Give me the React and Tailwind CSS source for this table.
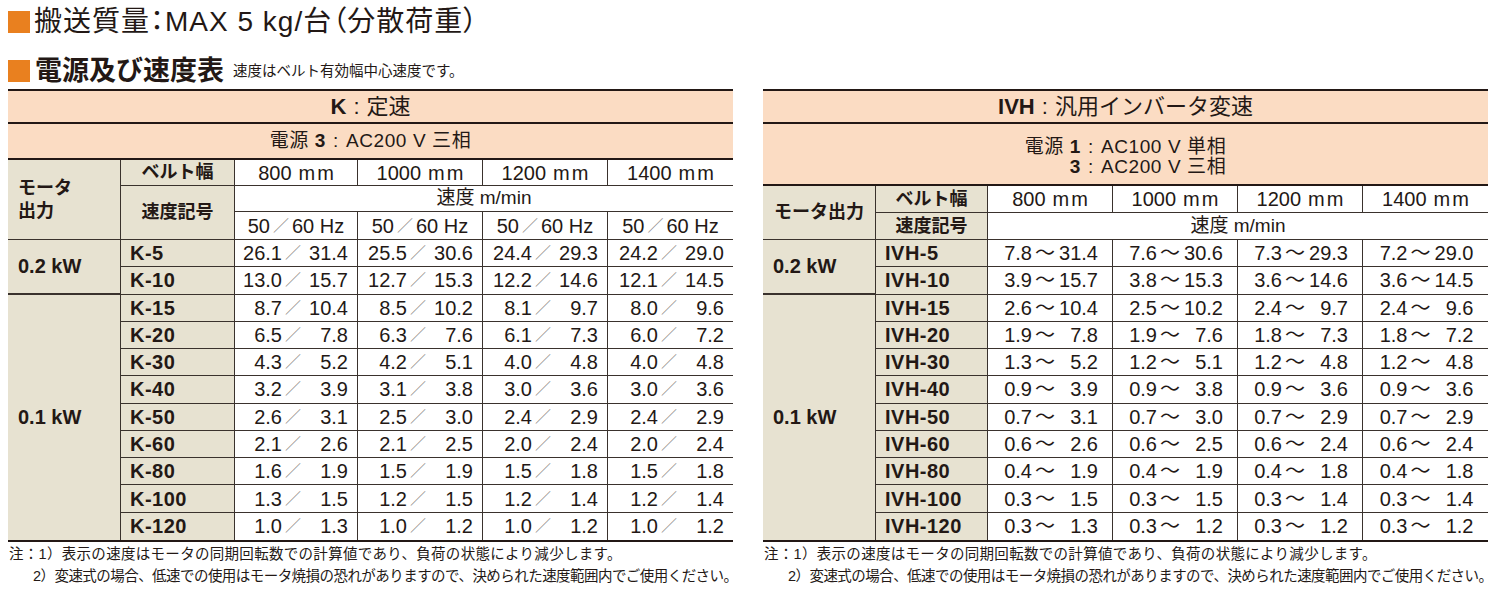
import React from "react";

const K_ROWS = [
  ["K-5", [["26.1", "31.4"], ["25.5", "30.6"], ["24.4", "29.3"], ["24.2", "29.0"]]],
  ["K-10", [["13.0", "15.7"], ["12.7", "15.3"], ["12.2", "14.6"], ["12.1", "14.5"]]],
  ["K-15", [["8.7", "10.4"], ["8.5", "10.2"], ["8.1", "9.7"], ["8.0", "9.6"]]],
  ["K-20", [["6.5", "7.8"], ["6.3", "7.6"], ["6.1", "7.3"], ["6.0", "7.2"]]],
  ["K-30", [["4.3", "5.2"], ["4.2", "5.1"], ["4.0", "4.8"], ["4.0", "4.8"]]],
  ["K-40", [["3.2", "3.9"], ["3.1", "3.8"], ["3.0", "3.6"], ["3.0", "3.6"]]],
  ["K-50", [["2.6", "3.1"], ["2.5", "3.0"], ["2.4", "2.9"], ["2.4", "2.9"]]],
  ["K-60", [["2.1", "2.6"], ["2.1", "2.5"], ["2.0", "2.4"], ["2.0", "2.4"]]],
  ["K-80", [["1.6", "1.9"], ["1.5", "1.9"], ["1.5", "1.8"], ["1.5", "1.8"]]],
  ["K-100", [["1.3", "1.5"], ["1.2", "1.5"], ["1.2", "1.4"], ["1.2", "1.4"]]],
  ["K-120", [["1.0", "1.3"], ["1.0", "1.2"], ["1.0", "1.2"], ["1.0", "1.2"]]],
];

const IVH_ROWS = [
  ["IVH-5", [["7.8", "31.4"], ["7.6", "30.6"], ["7.3", "29.3"], ["7.2", "29.0"]]],
  ["IVH-10", [["3.9", "15.7"], ["3.8", "15.3"], ["3.6", "14.6"], ["3.6", "14.5"]]],
  ["IVH-15", [["2.6", "10.4"], ["2.5", "10.2"], ["2.4", "9.7"], ["2.4", "9.6"]]],
  ["IVH-20", [["1.9", "7.8"], ["1.9", "7.6"], ["1.8", "7.3"], ["1.8", "7.2"]]],
  ["IVH-30", [["1.3", "5.2"], ["1.2", "5.1"], ["1.2", "4.8"], ["1.2", "4.8"]]],
  ["IVH-40", [["0.9", "3.9"], ["0.9", "3.8"], ["0.9", "3.6"], ["0.9", "3.6"]]],
  ["IVH-50", [["0.7", "3.1"], ["0.7", "3.0"], ["0.7", "2.9"], ["0.7", "2.9"]]],
  ["IVH-60", [["0.6", "2.6"], ["0.6", "2.5"], ["0.6", "2.4"], ["0.6", "2.4"]]],
  ["IVH-80", [["0.4", "1.9"], ["0.4", "1.9"], ["0.4", "1.8"], ["0.4", "1.8"]]],
  ["IVH-100", [["0.3", "1.5"], ["0.3", "1.5"], ["0.3", "1.4"], ["0.3", "1.4"]]],
  ["IVH-120", [["0.3", "1.3"], ["0.3", "1.2"], ["0.3", "1.2"], ["0.3", "1.2"]]],
];

const WIDTHS = ["800", "1000", "1200", "1400"];

function Slash() {
  return <span className="w-[22px] text-center text-[16px] text-[#8c8784] font-light">／</span>;
}

function Colon() {
  return <span className="mx-[7px]">:</span>;
}

function KCell({ a, b, last, bottom }) {
  return (
    <div
      className={
        "flex items-center justify-end pr-[9px] bg-white text-[20px] border-[#3a322d] " +
        (last ? "" : "border-r ") +
        (bottom ? "" : "border-b")
      }
    >
      <span className="w-[44px] text-right">{a}</span>
      <Slash />
      <span className="w-[44px] text-right">{b}</span>
    </div>
  );
}

function ICell({ a, b, last, bottom }) {
  return (
    <div
      className={
        "flex items-center justify-center bg-white text-[20px] border-[#3a322d] " +
        (last ? "" : "border-r ") +
        (bottom ? "" : "border-b")
      }
    >
      <span className="w-[30px] text-right">{a}</span>
      <span className="w-[26px] text-center">～</span>
      <span className="w-[40px] text-right">{b}</span>
    </div>
  );
}

function Notes() {
  return (
    <div className="pt-[1px] text-[14.5px] leading-[22px] whitespace-nowrap">
      <div className="pl-[1px] tracking-[0.3px]">注：1）表示の速度はモータの同期回転数での計算値であり、負荷の状態により減少します。</div>
      <div className="pl-[25px] tracking-[-0.55px]">2）変速式の場合、低速での使用はモータ焼損の恐れがありますので、決められた速度範囲内でご使用ください。</div>
    </div>
  );
}

function WidthHeaders() {
  return WIDTHS.map((w, i) => (
    <div
      key={w}
      className={
        "flex items-center justify-center bg-white border-b border-[#3a322d] text-[20px] " +
        (i === 3 ? "" : "border-r")
      }
    >
      <span>{w}</span>
      <span className="ml-[7px] tracking-[2px] mr-[-2px]">mm</span>
    </div>
  ));
}

function DataRows({ rows, Cell }) {
  const out = [];
  rows.forEach(([label, vals], r) => {
    const bottom = r === rows.length - 1;
    if (r === 0) {
      out.push(
        <div
          key={"g1"}
          className="row-span-2 flex items-center pl-[10px] bg-[#e7e2d1] border-r border-b-2 border-[#3a322d] text-[20px] font-bold"
        >
          0.2 kW
        </div>
      );
    }
    if (r === 2) {
      out.push(
        <div
          key={"g2"}
          className="row-span-9 flex items-center pl-[10px] bg-[#e7e2d1] border-r border-[#3a322d] text-[20px] font-bold"
        >
          0.1 kW
        </div>
      );
    }
    out.push(
      <div
        key={label}
        className={
          "flex items-center pl-[9px] bg-[#e7e2d1] border-r border-[#3a322d] text-[20px] font-bold tracking-[0.5px] " +
          (bottom ? "" : "border-b")
        }
      >
        {label}
      </div>
    );
    vals.forEach(([a, b], c) => {
      out.push(<Cell key={label + c} a={a} b={b} last={c === 3} bottom={bottom} />);
    });
  });
  return out;
}

function KTable() {
  return (
    <div className="w-[725px]">
      <div className="grid grid-cols-[113px_114px_123px_125px_125px_125px] grid-rows-[33px_36px_26px_26px_28px_repeat(11,27.27px)] border-t-2 border-b-2 border-[#231815]">
        <div className="col-span-6 flex items-center justify-center bg-[#fbdcc3] border-b-2 border-[#231815] text-[22px]">
          <span className="font-bold">K</span>
          <Colon />
          <span>定速</span>
        </div>
        <div className="col-span-6 flex items-center justify-center bg-[#fbdcc3] border-b-2 border-[#231815] text-[19px] tracking-[0.6px]">
          <span>電源&nbsp;</span>
          <span className="font-bold">3</span>
          <Colon />
          <span>AC200 V 三相</span>
        </div>
        <div className="row-span-3 flex items-center pl-[10px] bg-[#e7e2d1] border-r border-b border-[#3a322d] text-[18px] font-bold leading-[23px]">
          <div>
            モータ
            <br />
            出力
          </div>
        </div>
        <div className="flex items-center justify-center bg-[#e7e2d1] border-r border-b border-[#3a322d] text-[18px] font-bold">
          ベルト幅
        </div>
        <WidthHeaders />
        <div className="row-span-2 flex items-center justify-center bg-[#e7e2d1] border-r border-b border-[#3a322d] text-[18px] font-bold">
          速度記号
        </div>
        <div className="col-span-4 flex items-center justify-center bg-white border-b border-[#3a322d] text-[19px]">
          速度 m/min
        </div>
        {[0, 1, 2, 3].map((i) => (
          <div
            key={i}
            className={
              "flex items-center justify-center bg-white border-b border-[#3a322d] text-[20px] " +
              (i === 3 ? "" : "border-r")
            }
          >
            <span>50</span>
            <Slash />
            <span>60 Hz</span>
          </div>
        ))}
        <DataRows rows={K_ROWS} Cell={KCell} />
      </div>
      <Notes />
    </div>
  );
}

function IVHTable() {
  return (
    <div className="w-[725px]">
      <div className="grid grid-cols-[113px_112px_125px_125px_125px_125px] grid-rows-[33px_62px_27px_27px_repeat(11,27.27px)] border-t-2 border-b-2 border-[#231815]">
        <div className="col-span-6 flex items-center justify-center bg-[#fbdcc3] border-b-2 border-[#231815] text-[22px]">
          <span className="font-bold">IVH</span>
          <Colon />
          <span>汎用インバータ変速</span>
        </div>
        <div className="col-span-6 flex items-center justify-center pt-[6px] bg-[#fbdcc3] border-b-2 border-[#231815] text-[19px] leading-[20px] tracking-[0.6px]">
          <div className="grid grid-cols-[auto_auto]">
            <div className="text-right">
              電源&nbsp;<span className="font-bold">1</span>
            </div>
            <div>
              <Colon />
              AC100 V 単相
            </div>
            <div className="text-right">
              <span className="font-bold">3</span>
            </div>
            <div>
              <Colon />
              AC200 V 三相
            </div>
          </div>
        </div>
        <div className="row-span-2 flex items-center justify-center bg-[#e7e2d1] border-r border-b border-[#3a322d] text-[18px] font-bold">
          モータ出力
        </div>
        <div className="flex items-center justify-center bg-[#e7e2d1] border-r border-b border-[#3a322d] text-[18px] font-bold">
          ベルト幅
        </div>
        <WidthHeaders />
        <div className="flex items-center justify-center bg-[#e7e2d1] border-r border-b border-[#3a322d] text-[18px] font-bold">
          速度記号
        </div>
        <div className="col-span-4 flex items-center justify-center bg-white border-b border-[#3a322d] text-[19px]">
          速度 m/min
        </div>
        <DataRows rows={IVH_ROWS} Cell={ICell} />
      </div>
      <Notes />
    </div>
  );
}

export default function App() {
  return (
    <div className="w-[1500px] h-[595px] overflow-hidden bg-white text-[#231815] font-['Liberation_Sans','Noto_Sans_CJK_JP',sans-serif] px-[8px]">
      <div className="h-[44px] flex items-center gap-[4px]">
        <span className="w-[22px] h-[22px] bg-[#e9801f] shrink-0" />
        <span className="text-[28px] [font-feature-settings:'palt'] tracking-[1px]">
          搬送質量：MAX 5 kg/台（分散荷重）
        </span>
      </div>
      <div className="h-[45px] pt-[9px] flex items-center gap-[5px]">
        <span className="w-[22px] h-[22px] bg-[#e9801f] shrink-0" />
        <span className="text-[27px] font-bold leading-none">電源及び速度表</span>
        <span className="text-[14.5px] self-end mb-[6px] ml-[4px]">速度はベルト有効幅中心速度です。</span>
      </div>
      <div className="flex gap-[30px]">
        <KTable />
        <IVHTable />
      </div>
    </div>
  );
}
